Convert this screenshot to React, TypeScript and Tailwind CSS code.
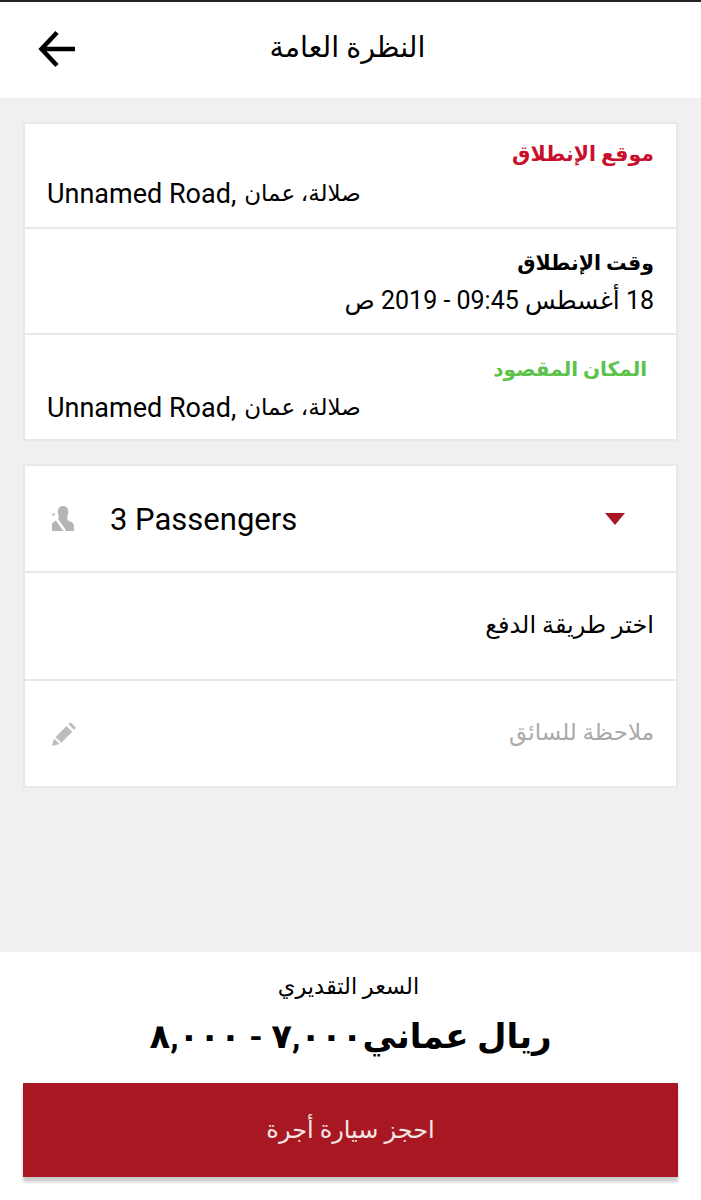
const font = "font-['Roboto','DejaVu_Sans',sans-serif]";

function BackArrow() {
  return (
    <svg className="absolute left-[38px] top-[28px]" width="38" height="38" viewBox="0 0 38 38" fill="none" stroke="#000" strokeWidth="4.5">
      <path d="M37 19H4" />
      <path d="M19 2.500L3.500 19 19 35.500" />
    </svg>
  );
}

function SeatIcon() {
  return (
    <svg width="22" height="25" viewBox="0 0 22 25">
      <path fill="#b5b5b5" d="M11 0C7 0 5.500 3 6 7c.3 2.500 1 4 .5 5.500C5 14 1 15.500 0 18v7h22v-4c0-4-2-5-5-6-2-1-2-3-1.500-5C17 6 17 0 11 0z" />
      <path stroke="#fff" strokeWidth="2.500" d="M2 9.500l11 15.500" />
      <path stroke="#b5b5b5" strokeWidth="1.500" d="M0 9.500l3-2" />
    </svg>
  );
}

function PencilIcon() {
  return (
    <svg width="26" height="26" viewBox="0 0 26 26" fill="#bdbdbd">
      <path d="M1 25l2-7.500 5.500 5.500z" />
      <path d="M4.500 16l11-11 5.800 5.800-11 11z" />
      <path d="M17.500 3.200l2-2 5.500 5.500-2 2z" />
    </svg>
  );
}

function Address() {
  return (
    <div className="flex items-center text-[27px] leading-[32px]">
      <span>Unnamed Road,</span>
      <span dir="rtl" className="ml-[8px] text-[23px]">صلالة، عمان</span>
    </div>
  );
}

export default function App() {
  return (
    <div className={`${font} flex h-[1200px] w-[701px] flex-col bg-[#f0f0f0] text-black`}>
      <header className="relative flex h-[98px] items-center justify-center border-t-2 border-[#222] bg-white pb-[4px] pr-[6px]">
        <BackArrow />
        <h1 dir="rtl" className="text-[28.500px] leading-none">النظرة العامة</h1>
      </header>

      <main className="flex flex-1 flex-col gap-[23px] px-[23px] pt-6">
        <section className="border-2 border-[#e8e8e8] bg-white">
          <div className="flex h-[103px] flex-col gap-[9px] px-[22px] pt-[15px]">
            <div dir="rtl" className="text-[20.500px] leading-[30px] font-bold text-[#c8102e]">موقع الإنطلاق</div>
            <Address />
          </div>
          <div className="flex h-[106px] flex-col gap-[7px] border-t-2 border-[#e8e8e8] px-[22px] pt-[19px]">
            <div dir="rtl" className="text-[20.500px] leading-[30px] font-bold">وقت الإنطلاق</div>
            <div dir="rtl" className="text-[25px] leading-[32px]">18 أغسطس 09:45 - 2019 ص</div>
          </div>
          <div className="flex h-[106px] flex-col gap-[8px] border-t-2 border-[#e8e8e8] px-[22px] pt-[19px]">
            <div dir="rtl" className="pr-[7px] text-[20px] leading-[30px] font-bold text-[#5cc24a]">المكان المقصود</div>
            <Address />
          </div>
        </section>

        <section className="border-2 border-[#e8e8e8] bg-white">
          <div className="flex h-[105px] items-center pl-[27px] pr-[51px]">
            <SeatIcon />
            <span className="ml-[36px] flex-1 pt-[4px] text-[31px]">3 Passengers</span>
            <span className="h-0 w-0 border-x-[10px] border-t-[12px] border-x-transparent border-t-[#a81823]" />
          </div>
          <div dir="rtl" className="flex h-[108px] items-center border-t-2 border-[#e8e8e8] px-[22px] pb-[2px] text-[24px]">اختر طريقة الدفع</div>
          <div className="flex h-[107px] items-center justify-between border-t-2 border-[#e8e8e8] pl-[26px] pr-[22px]">
            <PencilIcon />
            <span dir="rtl" className="text-[23px] text-[#aaaaaa]">ملاحظة للسائق</span>
          </div>
        </section>
      </main>

      <footer className="flex h-[248px] flex-col items-center bg-white px-[23px] pt-[18px]">
        <div dir="rtl" className="pr-[4px] text-[22.500px] leading-[32px]">السعر التقديري</div>
        <div dir="rtl" className="mt-[6px] text-[34px] leading-[56px] font-bold">ريال عماني٧,٠٠٠ - ٨,٠٠٠</div>
        <button dir="rtl" className="mt-[19px] flex h-[94px] w-full items-center justify-center bg-[#a81823] text-[24px] text-[#f5e6e6] shadow-[0_5px_3px_rgba(0,0,0,0.2)]">احجز سيارة أجرة</button>
      </footer>
    </div>
  );
}
